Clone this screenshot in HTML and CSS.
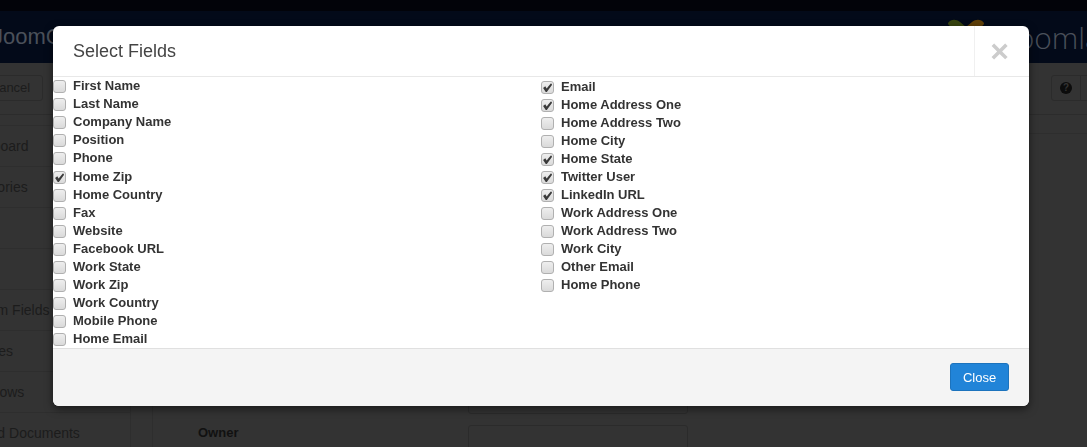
FILE: index.html
```html
<!DOCTYPE html>
<html lang="en">
<head>
  <meta charset="UTF-8">
  <meta name="viewport" content="width=device-width, initial-scale=1.0">
  <title>Select Fields</title>
  <link rel="stylesheet" href="styles.css">
</head>
<body>
  <div class="page">
    <div class="top-strip"></div>
    <header class="brand-bar">
      <span class="brand-left">JoomCRM</span>
      <span class="brand-right">
        <svg class="brand-logo" width="36" height="20" viewBox="0 0 36 20">
          <path d="M0 4c3-4 8-4 12-1l6 5-5 8-8-7C3 7 0 7 0 4z" fill="#37440f"/>
          <path d="M36 4c-3-4-8-4-12-1l-6 5 5 8 8-7c2-2 5-2 5-5z" fill="#5e3f08"/>
        </svg>
        <span class="brand-word">Joomla</span>
      </span>
    </header>
    <div class="toolbar">
      <span class="tool-btn">Cancel</span>
      <div class="tool-right">
        <span class="tool-help"><i>?</i></span>
        <span class="tool-next"></span>
      </div>
    </div>
    <div class="content">
      <nav class="side-nav">
        <a>Dashboard</a>
        <a>Categories</a>
        <a></a>
        <a></a>
        <a>Custom Fields</a>
        <a>Modules</a>
        <a>Workflows</a>
        <a>Shared Documents</a>
      </nav>
      <main class="form-area">
        <div class="form-head"></div>
        <div class="form-row"><span></span><div class="form-input"></div></div>
        <div class="form-row"><label>Owner</label><div class="form-input"></div></div>
      </main>
    </div>
  </div>

  <div class="modal">
    <div class="modal-header">
      <h3>Select Fields</h3>
      <button class="modal-x" type="button">×</button>
    </div>
    <div class="modal-body">
      <div class="field-col">
        <label class="field"><input type="checkbox"> First Name</label>
        <label class="field"><input type="checkbox"> Last Name</label>
        <label class="field"><input type="checkbox"> Company Name</label>
        <label class="field"><input type="checkbox"> Position</label>
        <label class="field"><input type="checkbox"> Phone</label>
        <label class="field field-low"><input type="checkbox" checked> Home Zip</label>
        <label class="field"><input type="checkbox"> Home Country</label>
        <label class="field"><input type="checkbox"> Fax</label>
        <label class="field"><input type="checkbox"> Website</label>
        <label class="field"><input type="checkbox"> Facebook URL</label>
        <label class="field"><input type="checkbox"> Work State</label>
        <label class="field"><input type="checkbox"> Work Zip</label>
        <label class="field"><input type="checkbox"> Work Country</label>
        <label class="field"><input type="checkbox"> Mobile Phone</label>
        <label class="field"><input type="checkbox"> Home Email</label>
      </div>
      <div class="field-col field-col-right">
        <label class="field"><input type="checkbox" checked> Email</label>
        <label class="field"><input type="checkbox" checked> Home Address One</label>
        <label class="field"><input type="checkbox"> Home Address Two</label>
        <label class="field"><input type="checkbox"> Home City</label>
        <label class="field"><input type="checkbox" checked> Home State</label>
        <label class="field"><input type="checkbox" checked> Twitter User</label>
        <label class="field"><input type="checkbox" checked> LinkedIn URL</label>
        <label class="field"><input type="checkbox"> Work Address One</label>
        <label class="field"><input type="checkbox"> Work Address Two</label>
        <label class="field"><input type="checkbox"> Work City</label>
        <label class="field"><input type="checkbox"> Other Email</label>
        <label class="field"><input type="checkbox"> Home Phone</label>
      </div>
    </div>
    <div class="modal-footer">
      <button class="btn-close" type="button">Close</button>
    </div>
  </div>
</body>
</html>
```

FILE: styles.css
```css
* {
  box-sizing: border-box;
}

html, body {
  height: 100%;
}

body {
  margin: 0;
  overflow: hidden;
  background: #333333;
  font-family: "Liberation Sans", Arial, sans-serif;
  color: #333;
}

/* page behind the dialog, dimmed */
.page {
  height: 447px;
  overflow: hidden;
  color: #1c1c1c;
  font-size: 14px;
}

.top-strip {
  height: 11px;
  background: #020309;
}

.brand-bar {
  height: 52px;
  background: #030a19;
  display: flex;
  justify-content: space-between;
  align-items: center;
  overflow: hidden;
  color: #4a505a;
}

.brand-left {
  margin-left: -8px;
  font-size: 22px;
}

.brand-right {
  display: flex;
  align-items: center;
  margin-right: -14px;
}

.brand-logo {
  margin-top: -16px;
}

.brand-word {
  margin-left: 25px;
  font-family: "Open Sans", sans-serif;
  font-size: 30px;
  font-weight: 300;
}

.toolbar {
  height: 52px;
  padding-top: 12px;
  border-bottom: 1px solid #2c2c2c;
  display: flex;
  justify-content: space-between;
  align-items: flex-start;
}

.tool-btn {
  margin-left: -23px;
  width: 66px;
  height: 26px;
  font-size: 13px;
  line-height: 24px;
  text-align: center;
  border: 1px solid #2b2b2b;
  border-radius: 3px;
}

.tool-right {
  display: flex;
  margin-right: -10px;
}

.tool-help,
.tool-next {
  height: 26px;
  border: 1px solid #2b2b2b;
}

.tool-help {
  width: 30px;
  display: flex;
  align-items: center;
  justify-content: center;
  border-radius: 3px 0 0 3px;
}

.tool-help i {
  width: 12px;
  height: 12px;
  border-radius: 50%;
  background: #0c0c0c;
  color: #333;
  font-style: normal;
  font-weight: bold;
  font-size: 10px;
  line-height: 12px;
  text-align: center;
}

.tool-next {
  width: 16px;
  border-left: 0;
}

.content {
  display: flex;
  height: 332px;
}

.side-nav {
  width: 131px;
  margin-top: 10px;
  border-top: 1px solid #2e2e2e;
  border-right: 1px solid #2e2e2e;
  display: flex;
  flex-direction: column;
  flex-shrink: 0;
}

.side-nav a {
  height: 41px;
  line-height: 40px;
  text-indent: -40px;
  border-bottom: 1px solid #2e2e2e;
  white-space: nowrap;
  flex-shrink: 0;
}

.form-area {
  margin-left: 21px;
  flex: 1;
  border-left: 1px solid #2e2e2e;
}

.form-head {
  height: 19px;
  margin-bottom: 246px;
  border-bottom: 1px solid #2e2e2e;
}

.form-row {
  display: flex;
  height: 34px;
  margin-bottom: 11px;
  padding-left: 45px;
}

.form-row label,
.form-row span {
  width: 270px;
  font-weight: bold;
  font-size: 13px;
  line-height: 16px;
  color: #111;
}

.form-input {
  width: 220px;
  height: 34px;
  border: 1px solid #2b2b2b;
  border-radius: 3px;
}

/* dialog */
.modal {
  position: fixed;
  left: 53px;
  top: 26px;
  width: 976px;
  height: 380px;
  display: flex;
  flex-direction: column;
  background: #fff;
  border-radius: 6px;
  box-shadow: 0 3px 9px rgba(0, 0, 0, 0.5);
}

.modal-header {
  height: 51px;
  flex-shrink: 0;
  display: flex;
  justify-content: space-between;
  border-bottom: 1px solid #e8e8e8;
}

.modal-header h3 {
  margin: 0;
  padding-left: 20px;
  font-size: 18px;
  font-weight: normal;
  line-height: 50px;
  color: #444;
}

.modal-x {
  width: 55px;
  padding: 0 5px 0 0;
  border: 0;
  border-left: 1px solid #f0f0f0;
  background: none;
  font-family: "Liberation Sans", Arial, sans-serif;
  font-size: 32px;
  font-weight: bold;
  line-height: 50px;
  color: #ccc;
}

.modal-body {
  flex: 1;
  display: flex;
}

.field-col {
  width: 488px;
  display: flex;
  flex-direction: column;
}

.field-col-right {
  padding-top: 1px;
}

.field {
  display: flex;
  align-items: center;
  height: 18px;
  font-size: 13px;
  font-weight: bold;
  line-height: 16px;
  color: #333;
}

.field-low {
  margin-top: 1px;
}

.field input {
  appearance: none;
  position: relative;
  width: 13px;
  height: 13px;
  margin: 1px 7px 0 0;
  flex-shrink: 0;
  border: 1px solid #b0b0b0;
  border-radius: 3px;
  background: linear-gradient(#eeeeee, #dadada);
}

.field input:checked::after {
  content: "";
  position: absolute;
  inset: 0;
  background: #3a3a3a;
  clip-path: polygon(10% 55%, 30% 38%, 42% 58%, 82% 12%, 92% 25%, 44% 90%, 34% 90%);
}

.modal-footer {
  height: 58px;
  flex-shrink: 0;
  display: flex;
  justify-content: flex-end;
  align-items: flex-start;
  padding: 14px 20px 0 0;
  background: #f4f4f4;
  border-top: 1px solid #e0e0e0;
  border-radius: 0 0 6px 6px;
}

.btn-close {
  width: 59px;
  height: 28px;
  padding: 0;
  border: 1px solid #1c73bd;
  border-radius: 3px;
  background: #2184d8;
  font-family: "Liberation Sans", Arial, sans-serif;
  font-size: 13px;
  color: #fff;
}
```
